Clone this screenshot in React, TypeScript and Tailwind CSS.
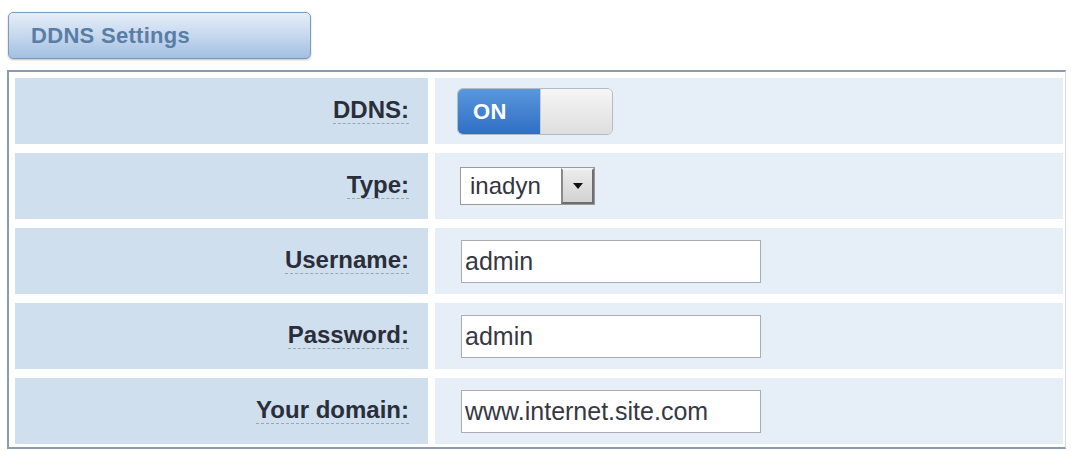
import React from "react";

const Label = ({ text }: { text: string }) => (
  <div className="flex items-center justify-end pr-[19px] bg-[#cfdfee]">
    <span className="text-[24px] leading-none font-bold text-[#2a2e3b] pb-[1px] border-b border-dashed border-[#9aa6b5]">
      {text}
    </span>
  </div>
);

const TextBox = ({ value }: { value: string }) => (
  <input
    readOnly
    value={value}
    className="w-[300px] h-[43px] px-[3px] bg-white border border-[#a9adb3] text-[25px] text-[#363845] outline-none font-['Liberation_Sans',Arial,sans-serif]"
  />
);

export default function App() {
  return (
    <div className="w-[1071px] h-[451px] bg-white font-['Liberation_Sans',Arial,sans-serif] overflow-hidden">
      <div className="pt-[12px] pl-[8px]">
        <div className="w-[303px] h-[47px] rounded-[5px] border border-[#7f9bba] bg-gradient-to-b from-[#e6eef8] via-[#c6d8ee] to-[#a2bfe2] flex items-center pl-[22px] shadow-[0_1px_2px_rgba(0,0,0,0.25)]">
          <span className="text-[22px] font-bold text-[#5a7da5] tracking-[0.3px]">DDNS Settings</span>
        </div>
      </div>
      <div className="mt-[11px] ml-[7px] w-[1059px] border-t-2 border-l-2 border-b-2 border-r border-t-[#8c9bab] border-l-[#8c9bab] border-b-[#8c9bab] border-r-[#d3dae2] pt-[6px] pl-[6px] pr-[2px] pb-[3px] flex flex-col gap-[9px]">
        {/* DDNS */}
        <div className="grid grid-cols-[413px_1fr] gap-[7px] h-[66px]">
          <Label text="DDNS:" />
          <div className="bg-[#e6eef8] flex items-center pl-[22px]">
            <div className="w-[156px] h-[47px] rounded-[6px] border border-[#b3bbc6] flex overflow-hidden">
              <div className="w-[82px] h-full bg-gradient-to-b from-[#5a97de] to-[#2f6ec4] flex items-center pl-[15px]">
                <span className="text-[22px] font-bold text-white tracking-[0.5px]">ON</span>
              </div>
              <div className="flex-1 h-full bg-gradient-to-b from-[#f6f6f6] to-[#dedede] border-l border-[#c7cbd1]" />
            </div>
          </div>
        </div>
        {/* Type */}
        <div className="grid grid-cols-[413px_1fr] gap-[7px] h-[66px]">
          <Label text="Type:" />
          <div className="bg-[#e6eef8] flex items-center pl-[25px]">
            <div className="w-[135px] h-[38px] bg-white border border-[#9a9a9a] flex items-center">
              <span className="flex-1 pl-[9px] text-[24px] leading-none text-[#33353f]">inadyn</span>
              <div className="w-[33px] h-full border-2 border-t-[#f4f4f4] border-l-[#8a8a8a] border-r-[#6e6e6e] border-b-[#6e6e6e] bg-gradient-to-b from-[#ececec] to-[#d2d2d2] flex items-center justify-center">
                <svg width="10" height="6" viewBox="0 0 10 6">
                  <path d="M0 0 H10 L5 6 Z" fill="#111" />
                </svg>
              </div>
            </div>
          </div>
        </div>
        {/* Username */}
        <div className="grid grid-cols-[413px_1fr] gap-[7px] h-[66px]">
          <Label text="Username:" />
          <div className="bg-[#e6eef8] flex items-center pl-[26px]">
            <TextBox value="admin" />
          </div>
        </div>
        {/* Password */}
        <div className="grid grid-cols-[413px_1fr] gap-[7px] h-[66px]">
          <Label text="Password:" />
          <div className="bg-[#e6eef8] flex items-center pl-[26px]">
            <TextBox value="admin" />
          </div>
        </div>
        {/* Your domain */}
        <div className="grid grid-cols-[413px_1fr] gap-[7px] h-[66px]">
          <Label text="Your domain:" />
          <div className="bg-[#e6eef8] flex items-center pl-[26px]">
            <TextBox value="www.internet.site.com" />
          </div>
        </div>
      </div>
    </div>
  );
}
